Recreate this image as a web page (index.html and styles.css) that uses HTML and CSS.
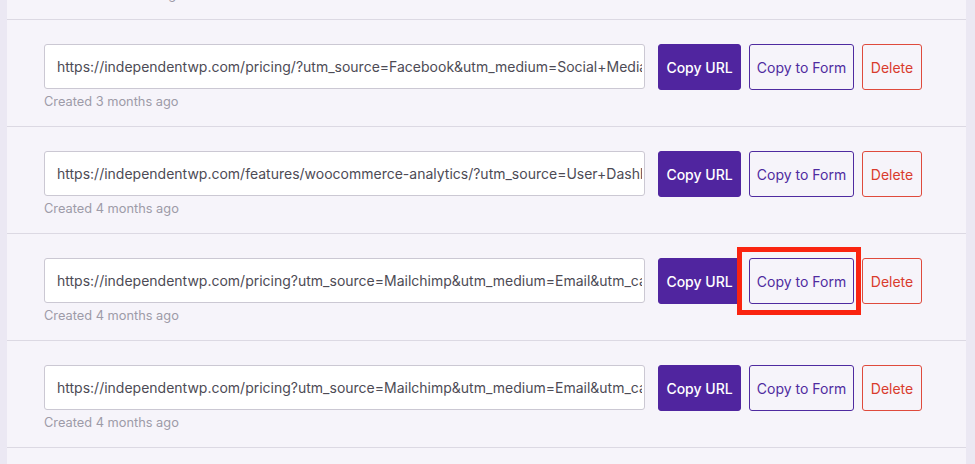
FILE: index.html
```html
<!DOCTYPE html>
<html lang="en">
<head>
<meta charset="utf-8">
<link rel="stylesheet" href="styles.css">
</head>
<body>
<div class="frame">
  <div class="panel">
    <div class="list">
      <div class="row">
        <div class="link-col">
          <input class="url" readonly value="https://independentwp.com/pricing/?utm_source=Google&utm_medium=Paid+Search&utm_campaign=Spring">
          <div class="meta">Created 10 months ago</div>
        </div>
        <div class="actions">
          <button class="btn btn-primary">Copy URL</button>
          <button class="btn btn-outline">Copy to Form</button>
          <button class="btn btn-danger">Delete</button>
        </div>
      </div>
      <div class="row">
        <div class="link-col">
          <input class="url" readonly value="https://independentwp.com/pricing/?utm_source=Facebook&utm_medium=Social+Media&utm_campaign=Launch">
          <div class="meta">Created 3 months ago</div>
        </div>
        <div class="actions">
          <button class="btn btn-primary">Copy URL</button>
          <button class="btn btn-outline">Copy to Form</button>
          <button class="btn btn-danger">Delete</button>
        </div>
      </div>
      <div class="row">
        <div class="link-col">
          <input class="url" readonly value="https://independentwp.com/features/woocommerce-analytics/?utm_source=User+Dashboard&utm_medium=Banner">
          <div class="meta">Created 4 months ago</div>
        </div>
        <div class="actions">
          <button class="btn btn-primary">Copy URL</button>
          <button class="btn btn-outline">Copy to Form</button>
          <button class="btn btn-danger">Delete</button>
        </div>
      </div>
      <div class="row">
        <div class="link-col">
          <input class="url" readonly value="https://independentwp.com/pricing?utm_source=Mailchimp&utm_medium=Email&utm_campaign=Newsletter">
          <div class="meta">Created 4 months ago</div>
        </div>
        <div class="actions">
          <button class="btn btn-primary">Copy URL</button>
          <span class="highlight-wrap">
            <button class="btn btn-outline">Copy to Form</button>
            <span class="highlight"></span>
          </span>
          <button class="btn btn-danger">Delete</button>
        </div>
      </div>
      <div class="row">
        <div class="link-col">
          <input class="url" readonly value="https://independentwp.com/pricing?utm_source=Mailchimp&utm_medium=Email&utm_campaign=Newsletter">
          <div class="meta">Created 4 months ago</div>
        </div>
        <div class="actions">
          <button class="btn btn-primary">Copy URL</button>
          <button class="btn btn-outline">Copy to Form</button>
          <button class="btn btn-danger">Delete</button>
        </div>
      </div>
    </div>
  </div>
</div>
</body>
</html>
```

FILE: styles.css
```css
html, body {
  margin: 0;
  padding: 0;
  height: 100%;
  overflow: hidden;
}

body {
  background: #ebe8f3;
  font-family: Inter, "Noto Sans", "Liberation Sans", sans-serif;
}

.frame {
  display: flex;
  height: 100%;
  padding-left: 7px;
  box-sizing: border-box;
}

.panel {
  width: 959px;
  height: 100%;
  background: #f6f4fa;
  overflow: hidden;
}

.list {
  margin-top: -87px;
}

.row {
  display: flex;
  align-items: flex-start;
  gap: 13px;
  height: 107px;
  padding: 24px 44px 0 37px;
  border-bottom: 1px solid #dcd9e3;
  box-sizing: border-box;
}

.link-col {
  flex: 1;
  min-width: 0;
  display: flex;
  flex-direction: column;
}

.url {
  width: 100%;
  height: 45px;
  box-sizing: border-box;
  border: 1px solid #cbc8d3;
  border-radius: 3px;
  background: #ffffff;
  padding: 0 2px 0 12px;
  font-family: inherit;
  font-size: 14px;
  color: #4d4b55;
  outline: none;
  margin: 0;
}

.meta {
  margin-top: 5px;
  font-size: 12.8px;
  line-height: 16px;
  color: #9d9ba8;
  white-space: nowrap;
}

.actions {
  display: flex;
  gap: 8px;
}

.btn {
  height: 46px;
  box-sizing: border-box;
  border-radius: 3px;
  font-family: inherit;
  font-size: 14px;
  padding: 0;
  margin: 0;
  white-space: nowrap;
  cursor: pointer;
  background: transparent;
}

.btn-primary {
  background: #50259f;
  border: 1px solid #50259f;
  color: #ffffff;
  font-weight: 500;
  width: 83px;
}

.btn-outline {
  border: 1px solid #4f2ba0;
  color: #4f2ba0;
  width: 105px;
}

.btn-danger {
  border: 1px solid #df4a3c;
  color: #d93b2d;
  width: 60px;
}

.highlight-wrap {
  position: relative;
  display: flex;
}

.highlight {
  position: absolute;
  left: -12px;
  right: -7px;
  top: -11px;
  bottom: -11px;
  border: 5px solid #fa2410;
  pointer-events: none;
}
```
